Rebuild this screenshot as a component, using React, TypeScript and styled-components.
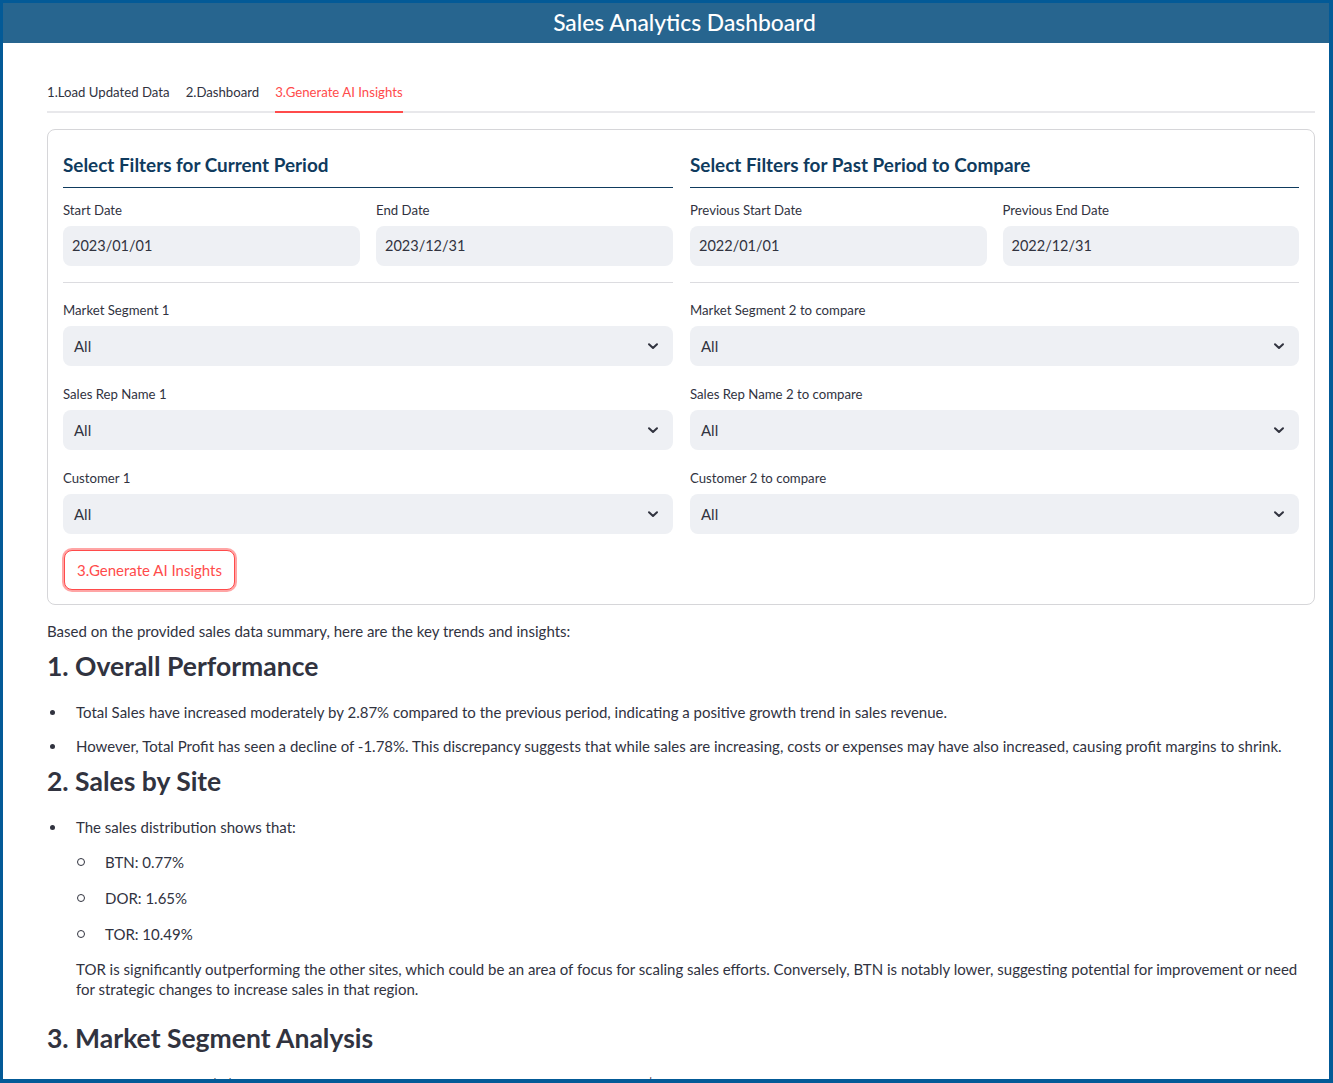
import React from "react";
import styled, { createGlobalStyle, css } from "styled-components";

const GlobalStyle = createGlobalStyle`
  html, body { margin: 0; padding: 0; background: #ffffff; }
  body {
    font-family: "Source Sans Pro", Lato, "Noto Sans", sans-serif;
    color: #31333f;
    -webkit-font-smoothing: antialiased;
  }
  * { box-sizing: border-box; }
`;

const Frame = styled.div`
  width: 1333px;
  height: 1083px;
  border-style: solid;
  border-color: #035a97;
  border-width: 3px 4px 4px 3px;
  overflow: hidden;
  background: #ffffff;
  display: flex;
  flex-direction: column;
`;

const Header = styled.header`
  height: 40px;
  flex: none;
  background: #27658f;
  color: #ffffff;
  display: flex;
  align-items: center;
  justify-content: center;
  padding: 0 0 2px 37px;
  font-size: 22.8px;
  font-weight: 500;
`;

const Main = styled.main`
  padding: 29px 14px 0 44px;
`;

const TabList = styled.div`
  display: flex;
  gap: 16px;
  border-bottom: 2px solid #e8e8eb;
  height: 41px;
`;

const Tab = styled.div<{ $active?: boolean }>`
  position: relative;
  height: 39px;
  display: flex;
  align-items: center;
  font-size: 13.2px;
  color: ${(p) => (p.$active ? "#ff4b4b" : "#31333f")};
  ${(p) =>
    p.$active &&
    css`
      &::after {
        content: "";
        position: absolute;
        left: 0;
        right: 0;
        bottom: -2px;
        height: 2px;
        background: #ff4b4b;
      }
    `}
`;

const Panel = styled.section`
  margin-top: 16px;
  border: 1px solid #d6d6d9;
  border-radius: 8px;
  padding: 16px 15px 14px 15px;
`;

const Columns = styled.div`
  display: grid;
  grid-template-columns: 610px 609px;
  column-gap: 17px;
`;

const Column = styled.div`
  display: flex;
  flex-direction: column;
`;

const SubHeader = styled.h3`
  margin: 0;
  padding: 7px 0 10px;
  font-size: 18.9px;
  line-height: 24px;
  font-weight: 700;
  color: #0f3b5e;
  border-bottom: 1px solid #0f3b5e;
`;

const DateRow = styled.div`
  display: grid;
  grid-template-columns: 1fr 1fr;
  gap: 16px;
  margin-top: 12px;
  padding-bottom: 16px;
  border-bottom: 1px solid #dcdce0;
`;

const Field = styled.div<{ $top?: number }>`
  display: flex;
  flex-direction: column;
  margin-top: ${(p) => p.$top ?? 0}px;
`;

const Label = styled.label`
  font-size: 13.2px;
  line-height: 20px;
  height: 20px;
  margin-bottom: 6px;
  color: #31333f;
`;

const InputBox = styled.div`
  height: 40px;
  border-radius: 8px;
  background: #eef0f4;
  display: flex;
  align-items: center;
  padding-left: 9px;
  padding-bottom: 1px;
  font-size: 14.5px;
  color: #31333f;
`;

const SelectBox = styled(InputBox)`
  padding: 0 12px 1px 11px;
  justify-content: space-between;
  font-size: 15px;
`;

const Chevron = styled.svg`
  width: 16px;
  height: 16px;
  flex: none;
`;

const Button = styled.button`
  margin-top: 16px;
  margin-left: 1px;
  height: 40px;
  padding: 0 12px;
  background: #ffffff;
  border: 1px solid #ff4b4b;
  border-radius: 8px;
  color: #ff4b4b;
  font-family: inherit;
  font-size: 15px;
  box-shadow: 0 0 0 2px rgba(255, 75, 75, 0.5);
  cursor: pointer;
`;

const Report = styled.article`
  margin-top: 14px;
  font-size: 15px;
  color: #31333f;
`;

const Para = styled.p<{ $inset?: boolean }>`
  margin: 0;
  line-height: 24px;
  ${(p) =>
    p.$inset &&
    css`
      margin: 13px 0 16px;
      line-height: 20px;
    `}
`;

const Heading = styled.h3`
  margin: 5px 0 16px;
  font-size: 26.5px;
  line-height: 36px;
  font-weight: 700;
  color: #31333f;
`;

const List = styled.ul<{ $nested?: boolean }>`
  list-style: none;
  margin: ${(p) => (p.$nested ? "11px 0 0" : "0")};
  padding: 0;
  display: flex;
  flex-direction: column;
  gap: ${(p) => (p.$nested ? "12px" : "10px")};
`;

const Item = styled.li`
  display: flex;
  line-height: 24px;
`;

const Marker = styled.span<{ $hollow?: boolean }>`
  flex: none;
  width: 29px;
  height: 24px;
  display: flex;
  align-items: center;
  &::before {
    content: "";
    display: block;
    border-radius: 50%;
    ${(p) =>
      p.$hollow
        ? css`
            width: 6px;
            height: 6px;
            margin-left: 1px;
            border: 1px solid #31333f;
          `
        : css`
            width: 5px;
            height: 5px;
            margin-left: 3px;
            background: #31333f;
          `}
  }
`;

const ItemBody = styled.div`
  flex: 1;
  min-width: 0;
`;

const ChevronIcon = () => (
  <Chevron viewBox="0 0 16 16" fill="none">
    <path d="M4 6.2l4 3.8 4-3.8" stroke="#31333f" strokeWidth="2" strokeLinecap="round" strokeLinejoin="round" />
  </Chevron>
);

const DateField = ({ label, value }: { label: string; value: string }) => (
  <Field>
    <Label>{label}</Label>
    <InputBox>{value}</InputBox>
  </Field>
);

const SelectField = ({ label, top }: { label: string; top: number }) => (
  <Field $top={top}>
    <Label>{label}</Label>
    <SelectBox>
      <span>All</span>
      <ChevronIcon />
    </SelectBox>
  </Field>
);

type Side = {
  title: string;
  dates: [string, string][];
  selects: string[];
};

const sides: Side[] = [
  {
    title: "Select Filters for Current Period",
    dates: [
      ["Start Date", "2023/01/01"],
      ["End Date", "2023/12/31"],
    ],
    selects: ["Market Segment 1", "Sales Rep Name 1", "Customer 1"],
  },
  {
    title: "Select Filters for Past Period to Compare",
    dates: [
      ["Previous Start Date", "2022/01/01"],
      ["Previous End Date", "2022/12/31"],
    ],
    selects: ["Market Segment 2 to compare", "Sales Rep Name 2 to compare", "Customer 2 to compare"],
  },
];

export default function App() {
  return (
    <>
      <GlobalStyle />
      <Frame>
        <Header>Sales Analytics Dashboard</Header>
        <Main>
          <TabList>
            <Tab>1.Load Updated Data</Tab>
            <Tab>2.Dashboard</Tab>
            <Tab $active>3.Generate AI Insights</Tab>
          </TabList>

          <Panel>
            <Columns>
              {sides.map((s) => (
                <Column key={s.title}>
                  <SubHeader>{s.title}</SubHeader>
                  <DateRow>
                    {s.dates.map(([l, v]) => (
                      <DateField key={l} label={l} value={v} />
                    ))}
                  </DateRow>
                  {s.selects.map((l, i) => (
                    <SelectField key={l} label={l} top={i === 0 ? 17 : 18} />
                  ))}
                </Column>
              ))}
            </Columns>
            <Button>3.Generate AI Insights</Button>
          </Panel>

          <Report>
            <Para>Based on the provided sales data summary, here are the key trends and insights:</Para>
            <Heading>1. Overall Performance</Heading>
            <List>
              <Item>
                <Marker />
                <ItemBody>
                  Total Sales have increased moderately by 2.87% compared to the previous period, indicating a positive growth trend in sales revenue.
                </ItemBody>
              </Item>
              <Item>
                <Marker />
                <ItemBody>
                  However, Total Profit has seen a decline of -1.78%. This discrepancy suggests that while sales are increasing, costs or expenses may have also increased, causing profit margins to shrink.
                </ItemBody>
              </Item>
            </List>
            <Heading>2. Sales by Site</Heading>
            <List>
              <Item>
                <Marker />
                <ItemBody>
                  The sales distribution shows that:
                  <List $nested>
                    {["BTN: 0.77%", "DOR: 1.65%", "TOR: 10.49%"].map((t) => (
                      <Item key={t}>
                        <Marker $hollow />
                        <ItemBody>{t}</ItemBody>
                      </Item>
                    ))}
                  </List>
                  <Para $inset>
                    TOR is significantly outperforming the other sites, which could be an area of focus for scaling sales efforts. Conversely, BTN is notably lower, suggesting potential for improvement or need for strategic changes to increase sales in that region.
                  </Para>
                </ItemBody>
              </Item>
            </List>
            <Heading>3. Market Segment Analysis</Heading>
            <List>
              <Item>
                <Marker />
                <ItemBody>
                  The Transit segment (TI) segment is highlighted as the best-performing, with a profit of $4,451,505. This indicates a strong demand and possibly better cost management associated with this market segment.
                </ItemBody>
              </Item>
            </List>
          </Report>
        </Main>
      </Frame>
    </>
  );
}
